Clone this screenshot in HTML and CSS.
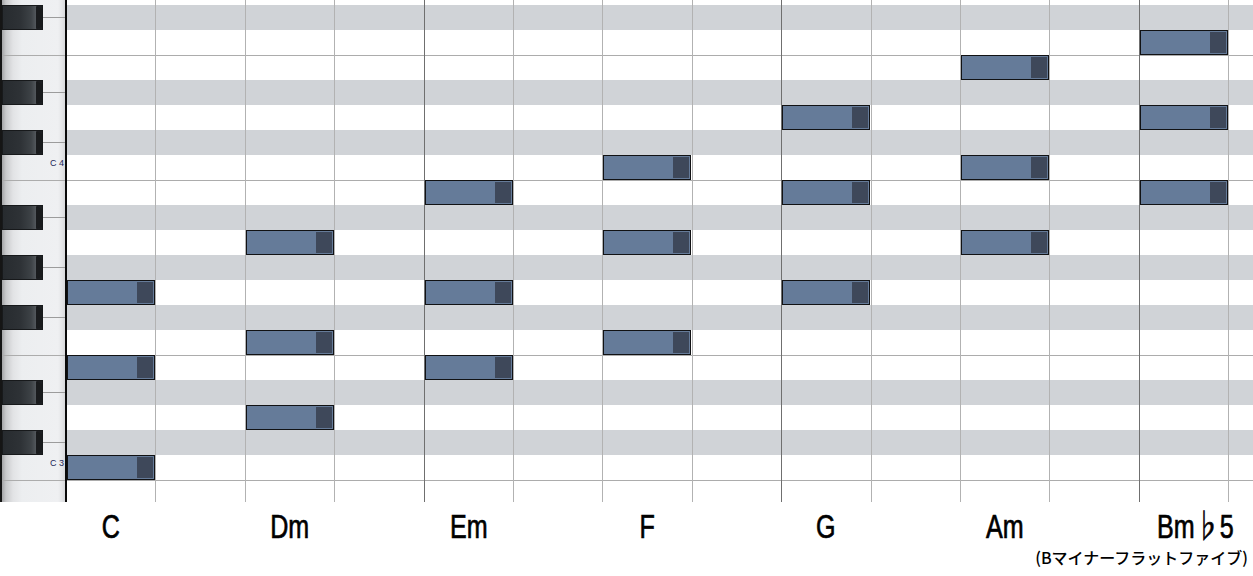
FILE: index.html
```html
<!DOCTYPE html>
<html lang="ja">
<head>
<meta charset="utf-8">
<title>ダイアトニックコード</title>
<link rel="stylesheet" href="styles.css">
</head>
<body>
<div class="roll">
  <div class="keyboard">
    <div class="row top"></div>
    <div class="row sharp"><span class="bk"></span><span class="seam"></span></div>
    <div class="row"></div>
    <div class="row edge"></div>
    <div class="row sharp"><span class="bk"></span><span class="seam"></span></div>
    <div class="row"></div>
    <div class="row sharp"><span class="bk"></span><span class="seam"></span></div>
    <div class="row c"><span>C 4</span></div>
    <div class="row edge"></div>
    <div class="row sharp"><span class="bk"></span><span class="seam"></span></div>
    <div class="row"></div>
    <div class="row sharp"><span class="bk"></span><span class="seam"></span></div>
    <div class="row"></div>
    <div class="row sharp"><span class="bk"></span><span class="seam"></span></div>
    <div class="row"></div>
    <div class="row edge"></div>
    <div class="row sharp"><span class="bk"></span><span class="seam"></span></div>
    <div class="row"></div>
    <div class="row sharp"><span class="bk"></span><span class="seam"></span></div>
    <div class="row c"><span>C 3</span></div>
    <div class="row edge bottom"></div>
  </div>
  <div class="lanes">
    <div class="stripes">
      <div class="row top"></div>
      <div class="row sharp"></div>
      <div class="row"></div>
      <div class="row edge"></div>
      <div class="row sharp"></div>
      <div class="row"></div>
      <div class="row sharp"></div>
      <div class="row"></div>
      <div class="row edge"></div>
      <div class="row sharp"></div>
      <div class="row"></div>
      <div class="row sharp"></div>
      <div class="row"></div>
      <div class="row sharp"></div>
      <div class="row"></div>
      <div class="row edge"></div>
      <div class="row sharp"></div>
      <div class="row"></div>
      <div class="row sharp"></div>
      <div class="row"></div>
      <div class="row edge bottom"></div>
    </div>
    <div class="notes">
      <!-- C -->
      <div class="note" style="grid-area: 20 / 1"></div>
      <div class="note" style="grid-area: 16 / 1"></div>
      <div class="note" style="grid-area: 13 / 1"></div>
      <!-- Dm -->
      <div class="note" style="grid-area: 18 / 3"></div>
      <div class="note" style="grid-area: 15 / 3"></div>
      <div class="note" style="grid-area: 11 / 3"></div>
      <!-- Em -->
      <div class="note" style="grid-area: 16 / 5"></div>
      <div class="note" style="grid-area: 13 / 5"></div>
      <div class="note" style="grid-area: 9 / 5"></div>
      <!-- F -->
      <div class="note" style="grid-area: 15 / 7"></div>
      <div class="note" style="grid-area: 11 / 7"></div>
      <div class="note" style="grid-area: 8 / 7"></div>
      <!-- G -->
      <div class="note" style="grid-area: 13 / 9"></div>
      <div class="note" style="grid-area: 9 / 9"></div>
      <div class="note" style="grid-area: 6 / 9"></div>
      <!-- Am -->
      <div class="note" style="grid-area: 11 / 11"></div>
      <div class="note" style="grid-area: 8 / 11"></div>
      <div class="note" style="grid-area: 4 / 11"></div>
      <!-- Bm♭5 -->
      <div class="note" style="grid-area: 9 / 13"></div>
      <div class="note" style="grid-area: 6 / 13"></div>
      <div class="note" style="grid-area: 3 / 13"></div>
    </div>
  </div>
</div>
<div class="labels">
  <div class="chords">
    <div class="chord"><span>C</span></div>
    <div class="chord"><span>Dm</span></div>
    <div class="chord"><span>Em</span></div>
    <div class="chord"><span>F</span></div>
    <div class="chord"><span>G</span></div>
    <div class="chord"><span>Am</span></div>
    <div class="chord wide"><span>Bm♭5</span></div>
  </div>
  <div class="reading">(Bマイナーフラットファイブ)</div>
</div>
</body>
</html>
```
FILE: styles.css
```css
* {
  box-sizing: border-box;
  margin: 0;
  padding: 0;
}

html,
body {
  background: #ffffff;
}

body {
  margin: 0;
  width: 1253px;
  height: 576px;
  overflow: hidden;
  font-family: "Liberation Sans", "Noto Sans CJK JP", sans-serif;
  color: #000;
}

.roll {
  display: flex;
  height: 502px;
}

.row {
  height: 25px;
  flex: none;
}

.row.top {
  height: 5px;
}

.row.bottom {
  height: 22px;
}

.row.edge {
  border-top: 1px solid #acacac;
}

/* keyboard */
.keyboard {
  width: 67px;
  flex: none;
  display: flex;
  flex-direction: column;
  border-left: 2px solid #151515;
  border-right: 2px solid #0a0a0a;
  background: linear-gradient(to right, #a4a5a7 0px, #c9cacc 4px, #e2e3e5 11px, #eceef0 20px, #eff0f2 56px, #e4e5e7 60px, #d8d9db 63px);
}

.keyboard .row.sharp {
  display: flex;
}

.bk {
  width: 41px;
  flex: none;
  display: flex;
  justify-content: flex-end;
  border: 1px solid #17191b;
  background: linear-gradient(to right, #272b2f 0%, #2e3236 45%, #3d4246 72%, #555a5f 86%, #1d1f22 86%);
}

.bk::after {
  content: "";
  width: 6px;
  background: #191b1d;
  clip-path: polygon(0 0, 100% 14%, 100% 90%, 0 100%);
}

.seam {
  flex: 1;
  background: linear-gradient(#9c9c9c, #9c9c9c) center / 100% 1px no-repeat;
}

.keyboard .row.c {
  display: flex;
  justify-content: flex-end;
  align-items: flex-start;
  padding: 3px 1px 0 0;
  font-size: 9px;
  line-height: 10px;
  color: #1a2658;
}

/* lanes */
.lanes {
  flex: 1;
  display: grid;
  overflow: hidden;
}

.lanes > * {
  grid-area: 1 / 1;
}

.stripes {
  display: flex;
  flex-direction: column;
}

.stripes .row.sharp {
  background: #d0d3d7;
}

.notes {
  display: grid;
  grid-template-columns: repeat(14, 89.4px);
  grid-template-rows: 5px repeat(19, 25px) 22px;
  background-image:
    repeating-linear-gradient(to right, transparent 0 356.6px, #6f6f6f 356.6px 357.6px),
    repeating-linear-gradient(to right, transparent 0 88.4px, #b2b2b2 88.4px 89.4px);
}

.note {
  width: 88px;
  height: 25px;
  display: flex;
  justify-content: flex-end;
  padding: 1px;
  border: 1px solid #111214;
  background: #657b99;
}

.note::after {
  content: "";
  width: 16px;
  background: #3e485a;
}

/* labels */
.labels {
  display: flex;
  flex-direction: column;
}

.chords {
  display: grid;
  grid-template-columns: repeat(7, 178.8px);
  padding: 5px 0 0 66px;
}

.chord {
  width: 89.4px;
  text-align: center;
  font-size: 33px;
  line-height: 40px;
  -webkit-text-stroke: 0.7px #000;
}

.chord span {
  display: inline-block;
  transform: scaleX(0.76);
}

.chord.wide span {
  margin-left: 6px;
}

.reading {
  text-align: right;
  padding-right: 5px;
  font-family: "Noto Sans CJK JP", sans-serif;
  font-size: 16px;
  line-height: 20px;
  font-weight: 500;
}
```
